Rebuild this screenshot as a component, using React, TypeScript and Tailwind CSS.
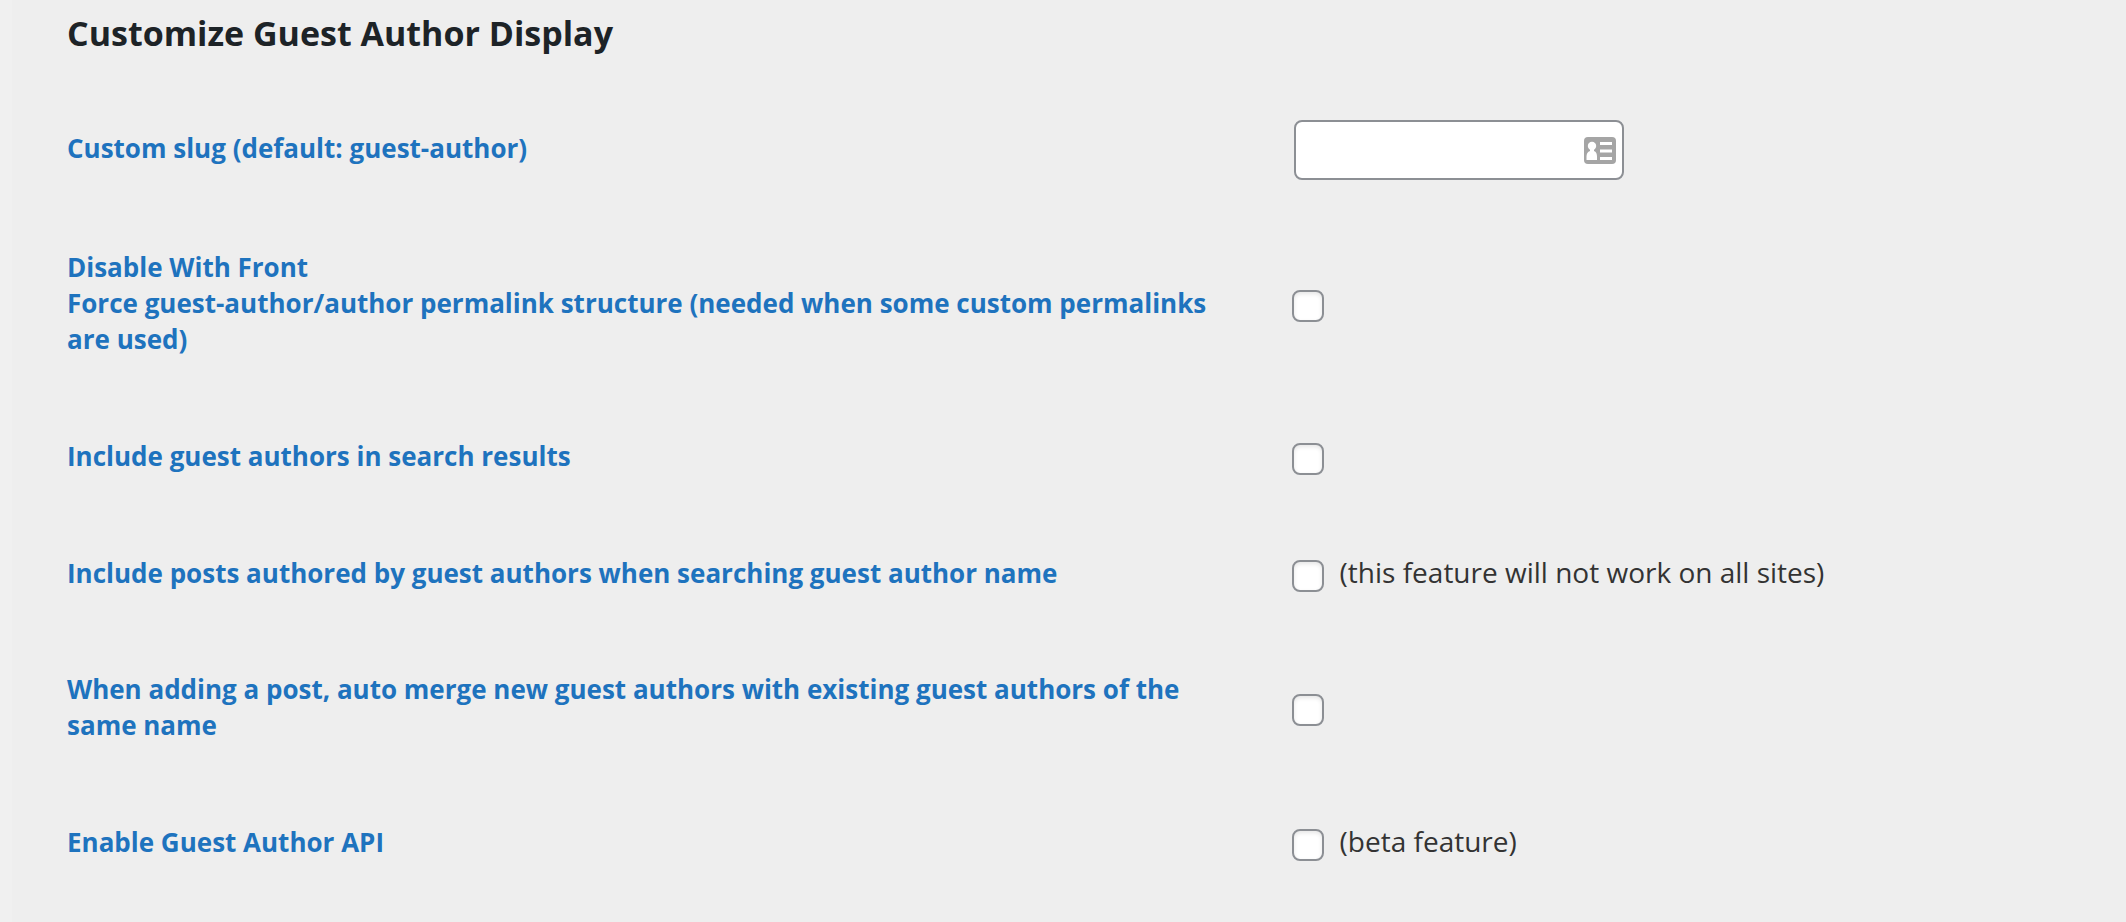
import type { ReactNode } from 'react';

type Setting = { id: string; label: ReactNode; note?: string };

const toggles: Setting[] = [
  {
    id: 'disable-with-front',
    label: (
      <>
        Disable With Front
        <br />
        Force guest-author/author permalink structure (needed when some custom permalinks are used)
      </>
    ),
  },
  { id: 'include-in-search', label: 'Include guest authors in search results' },
  {
    id: 'include-posts',
    label: 'Include posts authored by guest authors when searching guest author name',
    note: '(this feature will not work on all sites)',
  },
  {
    id: 'auto-merge',
    label: 'When adding a post, auto merge new guest authors with existing guest authors of the same name',
  },
  { id: 'enable-api', label: 'Enable Guest Author API', note: '(beta feature)' },
];

function ContactCardIcon() {
  return (
    <svg viewBox="0 0 32 27" className="h-[27px] w-8" aria-hidden="true">
      <rect width="32" height="27" rx="4" fill="#a5a5a5" />
      <circle cx="8" cy="9" r="4.2" fill="#fff" />
      <path d="M6 11h4v3c2.200.8 3 3 3 5.500V23H2.500v-3.500c0-2.500 1.200-4.700 3.500-5.500z" fill="#fff" />
      <path d="M16 5h12v3H16zM16 12.500h12v3H16zM16 20h12v3H16z" fill="#fff" />
    </svg>
  );
}

function ToggleRow({ id, label, note }: Setting) {
  return (
    <tr className="h-[117px]">
      <th scope="row" className="pt-[39px] pb-[41px] pr-10 text-left align-middle font-bold text-[#1e73be]">
        <label htmlFor={id} className="block">{label}</label>
      </th>
      <td className="align-middle">
        <div className="flex items-center gap-4">
          <input
            id={id}
            type="checkbox"
            className="mt-1 size-8 shrink-0 appearance-none rounded-lg border-2 border-[#8c8f94] bg-white shadow-[inset_0_2px_4px_rgba(0,0,0,0.1)] checked:bg-[#1e73be]"
          />
          {note && <label htmlFor={id} className="pb-1 text-[28px]">{note}</label>}
        </div>
      </td>
    </tr>
  );
}

export default function App() {
  return (
    <div className="min-h-screen bg-[#f0f0f0] pl-3 font-['Open_Sans',sans-serif] text-[26px] leading-9 text-[#333]">
      <main className="min-h-screen bg-[#eee] pr-[18px] pl-[55px]">
        <h2 className="pt-2 pb-8 text-[34px] leading-[50px] font-bold text-[#1d2327]">
          Customize Guest Author Display
        </h2>
        <table className="w-full table-fixed border-collapse">
          <colgroup>
            <col className="w-3/5" />
            <col className="w-2/5" />
          </colgroup>
          <tbody>
            <tr>
              <th scope="row" className="pr-10 pb-1 text-left align-middle font-bold text-[#1e73be]">
                <label htmlFor="custom-slug">Custom slug (default: guest-author)</label>
              </th>
              <td className="py-[30px] pl-0.5 align-middle">
                <div className="relative w-[330px]">
                  <input
                    id="custom-slug"
                    type="text"
                    className="block h-[60px] w-full rounded-lg border-2 border-[#8c8f94] bg-white pr-12 pl-4"
                  />
                  <span className="pointer-events-none absolute inset-y-0 right-2 flex items-center">
                    <ContactCardIcon />
                  </span>
                </div>
              </td>
            </tr>
            {toggles.map((setting) => (
              <ToggleRow key={setting.id} {...setting} />
            ))}
          </tbody>
        </table>
      </main>
    </div>
  );
}
